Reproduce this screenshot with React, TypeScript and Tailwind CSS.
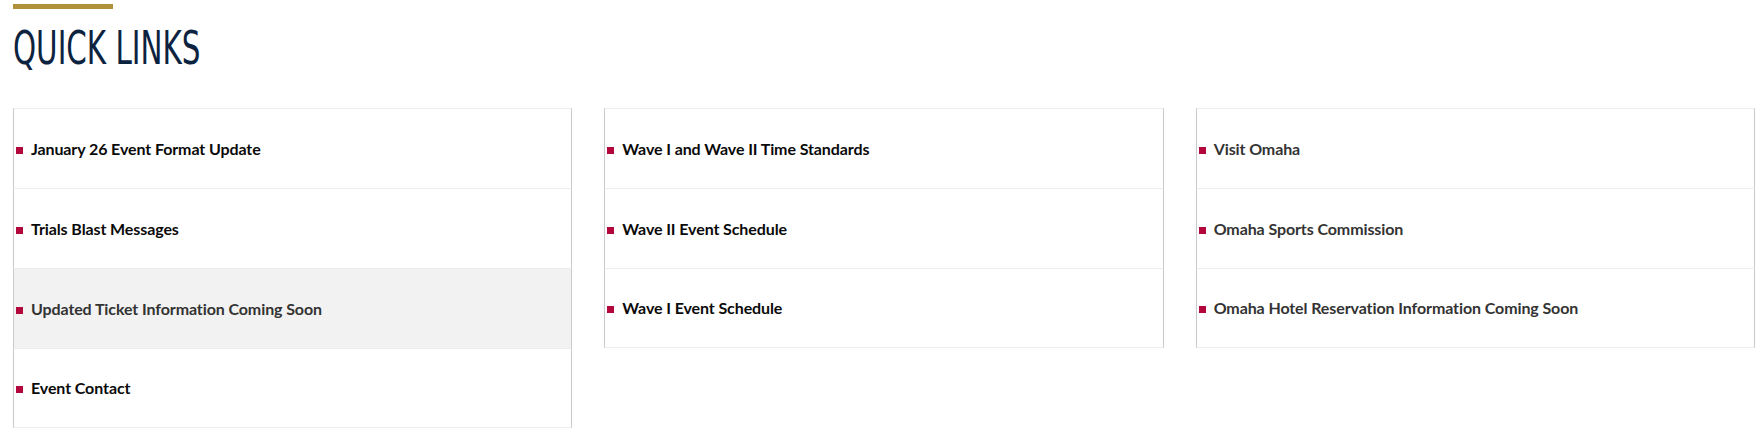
import React from 'react';

type QuickLink = { label: string; muted?: boolean; hover?: boolean };

const columns: QuickLink[][] = [
  [
    { label: 'January 26 Event Format Update' },
    { label: 'Trials Blast Messages' },
    { label: 'Updated Ticket Information Coming Soon', muted: true, hover: true },
    { label: 'Event Contact' },
  ],
  [
    { label: 'Wave I and Wave II Time Standards' },
    { label: 'Wave II Event Schedule' },
    { label: 'Wave I Event Schedule' },
  ],
  [
    { label: 'Visit Omaha', muted: true },
    { label: 'Omaha Sports Commission', muted: true },
    { label: 'Omaha Hotel Reservation Information Coming Soon', muted: true },
  ],
];

function LinkRow({ link, last }: { link: QuickLink; last: boolean }) {
  return (
    <a
      href="#"
      className={
        'flex h-[80px] items-center border-x border-t border-x-[#c9c9c9] border-t-[#ececec] ' +
        (last ? 'border-b border-b-[#ececec] ' : '') +
        (link.hover ? 'bg-[#f2f2f2]' : 'bg-white')
      }
    >
      <span className="ml-[2px] mt-[3px] h-[7px] w-[7px] shrink-0 bg-[#b3073b]" />
      <span
        className={
          'ml-[8px] text-[16px] font-bold tracking-[-0.1px] ' +
          (link.muted ? 'text-[#333333]' : 'text-[#0a0a0a]')
        }
        style={{ fontFamily: 'Lato, "Noto Sans", sans-serif' }}
      >
        {link.label}
      </span>
    </a>
  );
}

export default function App() {
  return (
    <div className="min-h-[439px] bg-white pl-[13px] pr-[3px] pt-[4px]">
      <div className="h-[5px] w-[100px] bg-[#b0913a]" />
      <h2
        className="mt-[16px] h-[83px] origin-left scale-x-[0.71] text-[46px] leading-[46px] font-normal text-[#0c2340]"
        style={{ fontFamily: '"DejaVu Sans Condensed", "Liberation Sans Narrow", "Liberation Sans", sans-serif' }}
      >
        QUICK LINKS
      </h2>
      <div className="grid grid-cols-3 items-start gap-x-8">
        {columns.map((col, i) => (
          <div key={i} className="flex flex-col">
            {col.map((link, j) => (
              <LinkRow key={link.label} link={link} last={j === col.length - 1} />
            ))}
          </div>
        ))}
      </div>
    </div>
  );
}
